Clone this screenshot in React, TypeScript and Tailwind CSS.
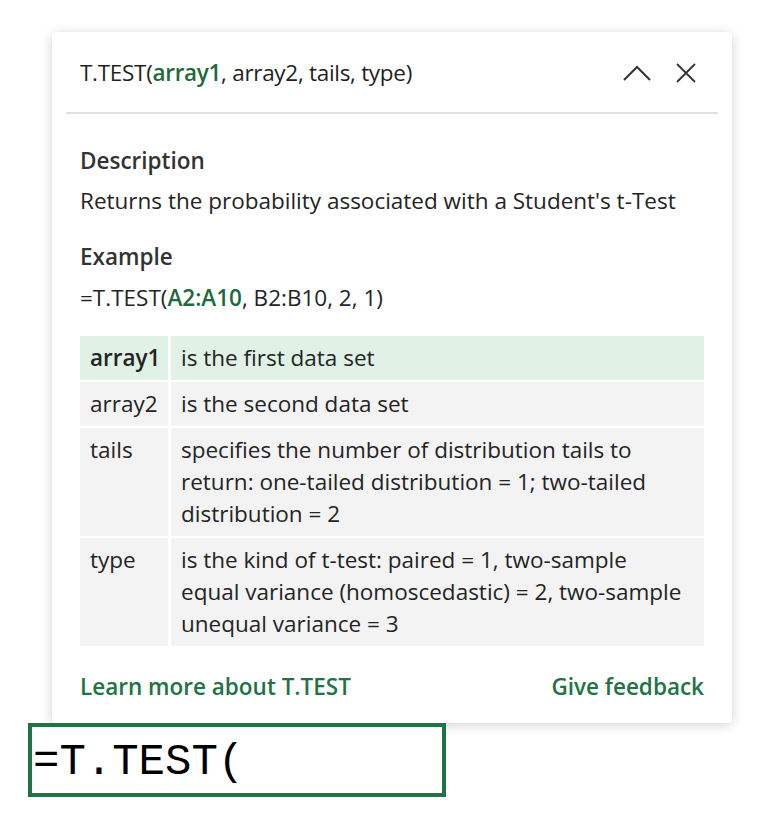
import React from "react";

const rows: { name: string; desc: string; active?: boolean }[] = [
  { name: "array1", desc: "is the first data set", active: true },
  { name: "array2", desc: "is the second data set" },
  {
    name: "tails",
    desc: "specifies the number of distribution tails to return: one-tailed distribution = 1; two-tailed distribution = 2",
  },
  {
    name: "type",
    desc: "is the kind of t-test: paired = 1, two-sample equal variance (homoscedastic) = 2, two-sample unequal variance = 3",
  },
];

export default function App() {
  return (
    <div
      className="w-[765px] h-[821px] bg-white relative text-[#242424]"
      style={{ fontFamily: '"Open Sans", "Noto Sans", sans-serif' }}
    >
      <div className="pt-[32px] pl-[52px]">
        <div className="w-[680px] bg-white rounded-[4px] shadow-[0_2px_12px_rgba(0,0,0,0.18)]">
          <div className="h-[80px] flex items-center pl-[28px] pr-[36px] pt-[2px]">
            <div className="flex-1 text-[22.5px] tracking-[-0.3px] text-[#1f1f1f]">
              T.TEST(<span className="text-[#1d6b3c] font-semibold">array1</span>, array2, tails, type)
            </div>
            <svg width="30" height="20" viewBox="0 0 30 20" className="mr-[24px]">
              <path d="M2 17 L15 4 L28 17" fill="none" stroke="#333" strokeWidth="2" />
            </svg>
            <svg width="20" height="20" viewBox="0 0 20 20">
              <path d="M1 1 L19 19 M19 1 L1 19" fill="none" stroke="#333" strokeWidth="1.8" />
            </svg>
          </div>
          <div className="mx-[14px] h-[2px] bg-[#e1e1e1]" />
          <div className="px-[28px] pt-[31px] pb-[20px] text-[22.5px] leading-[32px]">
            <div className="font-semibold text-[#333]">Description</div>
            <div className="mt-[8px]">Returns the probability associated with a Student's t-Test</div>
            <div className="mt-[24px] font-semibold text-[#333]">Example</div>
            <div className="mt-[9px]">
              =T.TEST(<span className="text-[#1d6b3c] font-semibold">A2:A10</span>, B2:B10, 2, 1)
            </div>
            <div className="mt-[22px] flex flex-col gap-[2px]">
              {rows.map((r) => (
                <div key={r.name} className="flex gap-[3px]">
                  <div
                    className={
                      "w-[88px] shrink-0 pl-[10px] py-[6px] " +
                      (r.active ? "bg-[#e0f1e6] font-semibold" : "bg-[#f3f3f3]")
                    }
                  >
                    {r.name}
                  </div>
                  <div
                    className={
                      "flex-1 pl-[10px] pr-[15px] py-[6px] " + (r.active ? "bg-[#e0f1e6]" : "bg-[#f3f3f3]")
                    }
                  >
                    {r.desc}
                  </div>
                </div>
              ))}
            </div>
            <div className="mt-[25px] flex justify-between font-semibold text-[#217346]">
              <span>Learn more about T.TEST</span>
              <span>Give feedback</span>
            </div>
          </div>
        </div>
      </div>
      <div className="absolute left-[28px] top-[723px] w-[418px] h-[74px] border-[4px] border-[#217346] bg-white flex items-center overflow-visible">
        <span
          className="text-[44px] leading-none text-black pl-[1px] pt-[4px]"
          style={{ fontFamily: '"Liberation Mono", monospace' }}
        >
          =T.TEST(
        </span>
      </div>
    </div>
  );
}
